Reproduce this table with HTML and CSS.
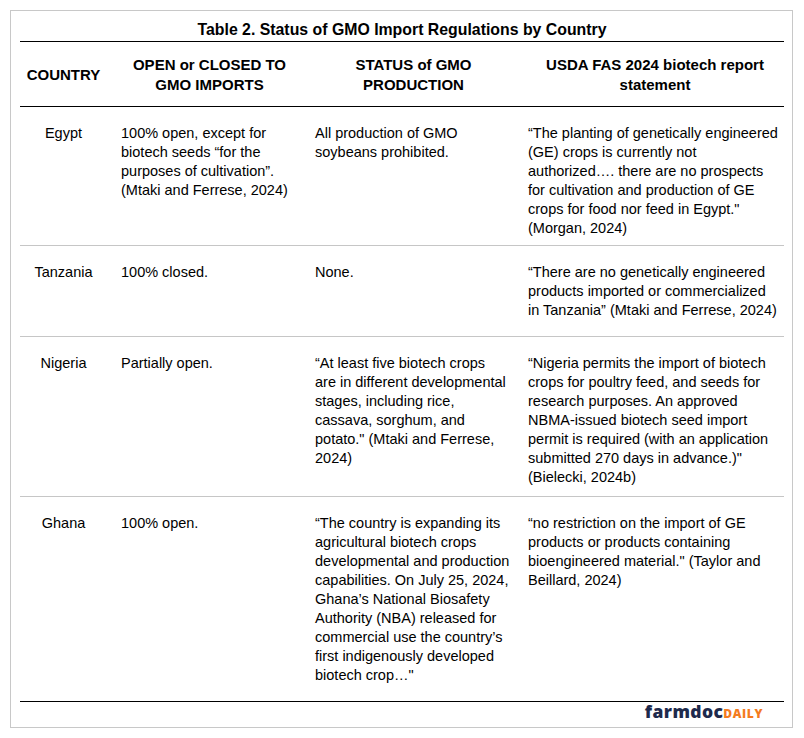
FILE: index.html
```html
<!DOCTYPE html>
<html lang="en">
<head>
<meta charset="utf-8">
<title>Table 2. Status of GMO Import Regulations by Country</title>
<link rel="stylesheet" href="styles.css">
</head>
<body>
<div class="frame">
  <div class="title">Table 2. Status of GMO Import Regulations by Country</div>
  <div class="grid head">
    <div class="cell c1">COUNTRY</div>
    <div class="cell c2">OPEN or CLOSED TO<br>GMO IMPORTS</div>
    <div class="cell c3">STATUS of GMO<br>PRODUCTION</div>
    <div class="cell c4">USDA FAS 2024 biotech report<br>statement</div>
  </div>
  <div class="grid row r-egypt">
    <div class="cell c1">Egypt</div>
    <div class="cell c2">100% open, except for<br>biotech seeds “for the<br>purposes of cultivation”.<br>(Mtaki and Ferrese, 2024)</div>
    <div class="cell c3">All production of GMO<br>soybeans prohibited.</div>
    <div class="cell c4">“The planting of genetically engineered<br>(GE) crops is currently not<br>authorized…. there are no prospects<br>for cultivation and production of GE<br>crops for food nor feed in Egypt."<br>(Morgan, 2024)</div>
  </div>
  <div class="grid row r-tanzania">
    <div class="cell c1">Tanzania</div>
    <div class="cell c2">100% closed.</div>
    <div class="cell c3">None.</div>
    <div class="cell c4">“There are no genetically engineered<br>products imported or commercialized<br>in Tanzania” (Mtaki and Ferrese, 2024)</div>
  </div>
  <div class="grid row r-nigeria">
    <div class="cell c1">Nigeria</div>
    <div class="cell c2">Partially open.</div>
    <div class="cell c3">“At least five biotech crops<br>are in different developmental<br>stages, including rice,<br>cassava, sorghum, and<br>potato." (Mtaki and Ferrese,<br>2024)</div>
    <div class="cell c4">“Nigeria permits the import of biotech<br>crops for poultry feed, and seeds for<br>research purposes. An approved<br>NBMA-issued biotech seed import<br>permit is required (with an application<br>submitted 270 days in advance.)"<br>(Bielecki, 2024b)</div>
  </div>
  <div class="grid row r-ghana last">
    <div class="cell c1">Ghana</div>
    <div class="cell c2">100% open.</div>
    <div class="cell c3">“The country is expanding its<br>agricultural biotech crops<br>developmental and production<br>capabilities. On July 25, 2024,<br>Ghana’s National Biosafety<br>Authority (NBA) released for<br>commercial use the country’s<br>first indigenously developed<br>biotech crop…"</div>
    <div class="cell c4">“no restriction on the import of GE<br>products or products containing<br>bioengineered material." (Taylor and<br>Beillard, 2024)</div>
  </div>
  <div class="footer">
    <span class="logo"><span class="logo-farm">farmdoc</span><span class="logo-daily">DAILY</span></span>
  </div>
</div>
</body>
</html>
```

FILE: styles.css
```css
html, body {
  margin: 0;
  padding: 0;
  background: #ffffff;
}

body {
  font-family: "Liberation Sans", Arial, sans-serif;
  color: #000000;
}

.frame {
  box-sizing: border-box;
  margin: 10px 0 0 10px;
  width: 783px;
  height: 718px;
  border: 1px solid #c8c8c8;
  padding: 0 8px 0 9px;
  display: flex;
  flex-direction: column;
}

.frame > * {
  flex-shrink: 0;
}

.title {
  box-sizing: border-box;
  height: 31px;
  padding-top: 8px;
  font-size: 15.85px;
  line-height: 22px;
  font-weight: bold;
  text-align: center;
  border-bottom: 1px solid #000000;
}

.grid {
  display: grid;
  grid-template-columns: 93px 193px 214px 264px;
}

.cell {
  box-sizing: border-box;
  min-width: 0;
}

.c1 { padding: 0 8px 0 2px; text-align: center; }
.c2 { padding: 0 8px 0 8px; }
.c3 { padding: 0 8px 0 9px; }
.c4 { padding: 0 2px 0 8px; }

.head {
  box-sizing: border-box;
  height: 65px;
  padding-top: 1px;
  align-items: center;
  font-size: 15px;
  line-height: 20px;
  font-weight: bold;
  border-bottom: 1px solid #000000;
}

.head .cell {
  text-align: center;
}

.row {
  box-sizing: border-box;
  padding-top: 16.5px;
  font-size: 14.5px;
  line-height: 19px;
  border-bottom: 1px solid #c6c6c6;
}

.row .cell {
  white-space: nowrap;
}

.r-egypt { height: 139px; }
.r-tanzania { height: 91px; }
.r-nigeria { height: 160px; }
.r-ghana { height: 205px; }

.row.last {
  border-bottom: 1px solid #000000;
}

.footer {
  display: flex;
  justify-content: flex-end;
  padding-right: 21px;
}

.logo {
  font-family: "Open Sans", "DejaVu Sans", sans-serif;
  font-weight: 800;
  font-size: 17.5px;
  line-height: 18px;
  white-space: nowrap;
}

.logo-farm {
  color: #1e2a4c;
  letter-spacing: 0.4px;
}

.logo-daily {
  font-size: 12px;
  color: #f47b20;
  letter-spacing: 0.6px;
}
```
